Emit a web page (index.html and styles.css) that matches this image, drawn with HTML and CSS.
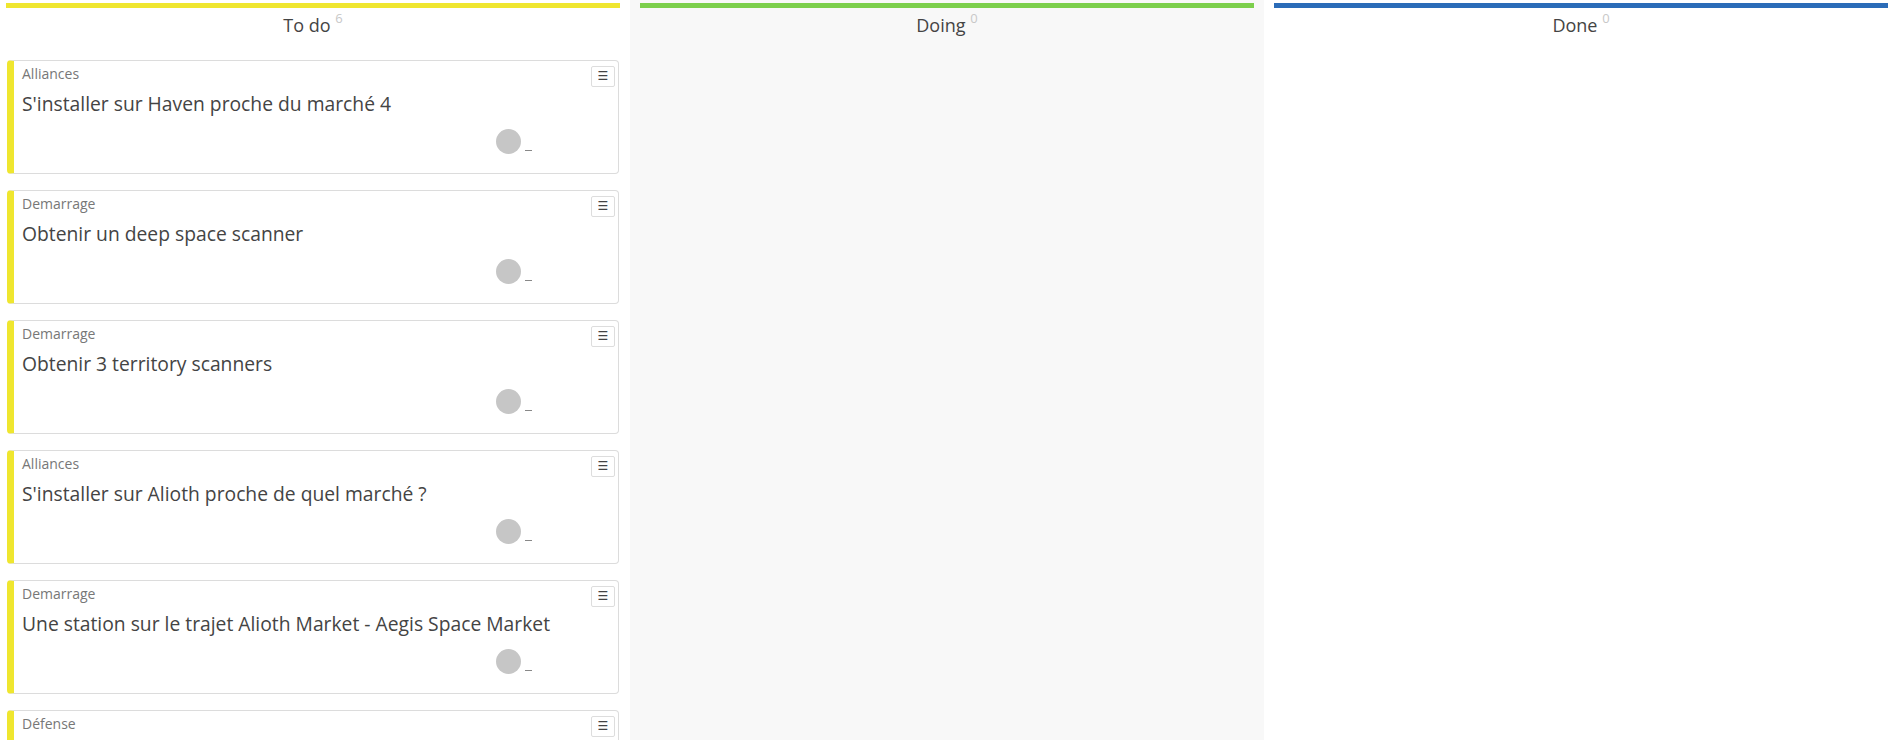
FILE: index.html
```html
<!DOCTYPE html>
<html lang="fr">
<head>
    <meta charset="UTF-8">
    <meta name="viewport" content="width=device-width, initial-scale=1.0">
    <title>Tableau</title>
    <link rel="stylesheet" href="styles.css">
</head>
<body>
    <div class="board">
        <div class="column todo">
            <div class="column-bar"></div>
            <div class="column-title">To do <sup>6</sup></div>
            <div class="cards">
                <div class="card">
                    <div class="card-category">Alliances</div>
                    <div class="card-title">S'installer sur Haven proche du marché 4</div>
                    <div class="card-footer"><span class="avatar"></span><span class="avatar-name"></span></div>
                    <button class="card-menu">&#9776;</button>
                </div>
                <div class="card">
                    <div class="card-category">Demarrage</div>
                    <div class="card-title">Obtenir un deep space scanner</div>
                    <div class="card-footer"><span class="avatar"></span><span class="avatar-name"></span></div>
                    <button class="card-menu">&#9776;</button>
                </div>
                <div class="card">
                    <div class="card-category">Demarrage</div>
                    <div class="card-title">Obtenir 3 territory scanners</div>
                    <div class="card-footer"><span class="avatar"></span><span class="avatar-name"></span></div>
                    <button class="card-menu">&#9776;</button>
                </div>
                <div class="card">
                    <div class="card-category">Alliances</div>
                    <div class="card-title">S'installer sur Alioth proche de quel marché ?</div>
                    <div class="card-footer"><span class="avatar"></span><span class="avatar-name"></span></div>
                    <button class="card-menu">&#9776;</button>
                </div>
                <div class="card">
                    <div class="card-category">Demarrage</div>
                    <div class="card-title">Une station sur le trajet Alioth Market - Aegis Space Market</div>
                    <div class="card-footer"><span class="avatar"></span><span class="avatar-name"></span></div>
                    <button class="card-menu">&#9776;</button>
                </div>
                <div class="card">
                    <div class="card-category">Défense</div>
                    <div class="card-title">Protéger les territoires</div>
                    <div class="card-footer"><span class="avatar"></span><span class="avatar-name"></span></div>
                    <button class="card-menu">&#9776;</button>
                </div>
            </div>
        </div>
        <div class="column doing">
            <div class="column-bar"></div>
            <div class="column-title">Doing <sup>0</sup></div>
            <div class="cards"></div>
        </div>
        <div class="column done">
            <div class="column-bar"></div>
            <div class="column-title">Done <sup>0</sup></div>
            <div class="cards"></div>
        </div>
    </div>
</body>
</html>
```

FILE: styles.css
```css
html, body {
    margin: 0;
    height: 100%;
    overflow: hidden;
}
body {
    background: #fff;
    color: #444;
    font-family: "Open Sans", "Liberation Sans", sans-serif;
}
.board {
    display: flex;
    height: 100%;
    margin-left: -4px;
}
.column {
    flex: 0 0 634px;
    box-sizing: border-box;
    padding: 3px 10px 0;
}
.column.doing {
    background: #f8f8f8;
}
.column-bar {
    height: 5px;
}
.todo .column-bar {
    background: #efe62f;
}
.doing .column-bar {
    background: #7ccf4c;
}
.done .column-bar {
    background: #2b6cb8;
}
.column-title {
    text-align: center;
    font-size: 18px;
    line-height: 24px;
    padding: 5px 0 23px;
    color: #444;
}
.column-title sup {
    font-size: 13px;
    color: #c8c8c8;
    vertical-align: top;
    position: relative;
    top: -7px;
}
.cards {
    padding: 0 1px;
}
.card {
    position: relative;
    height: 114px;
    box-sizing: border-box;
    margin-bottom: 16px;
    padding: 3px 8px 0;
    background: #fff;
    border: 1px solid #dcdcdc;
    border-left: 7px solid #efe62f;
    border-radius: 4px;
}
/* drag handle dots */
.card::before {
    content: "";
    position: absolute;
    left: -6px;
    top: 38px;
    width: 4px;
    height: 26px;
    background-image: radial-gradient(rgba(255, 255, 255, 0.6) 0.6px, transparent 0.7px);
    background-size: 2px 2px;
}
.card-category {
    font-size: 14px;
    line-height: 20px;
    color: #777;
}
.card-title {
    margin-top: 8px;
    font-size: 19.3px;
    line-height: 24px;
    color: #444;
}
.card-footer {
    display: flex;
    align-items: flex-end;
    justify-content: flex-end;
    padding-right: 78px;
    margin-top: 13px;
}
.avatar {
    width: 25px;
    height: 25px;
    border-radius: 50%;
    background: #c6c6c6;
}
.avatar-name {
    width: 7px;
    height: 1px;
    margin: 0 0 3px 4px;
    background: #888;
}
.card-menu {
    position: absolute;
    top: 5px;
    right: 3px;
    width: 24px;
    height: 21px;
    padding: 0;
    border: 1px solid #ddd;
    border-radius: 2px;
    background: #fff;
    color: #444;
    font-size: 12px;
    line-height: 19px;
    font-family: "DejaVu Sans", sans-serif;
    cursor: pointer;
}
```
